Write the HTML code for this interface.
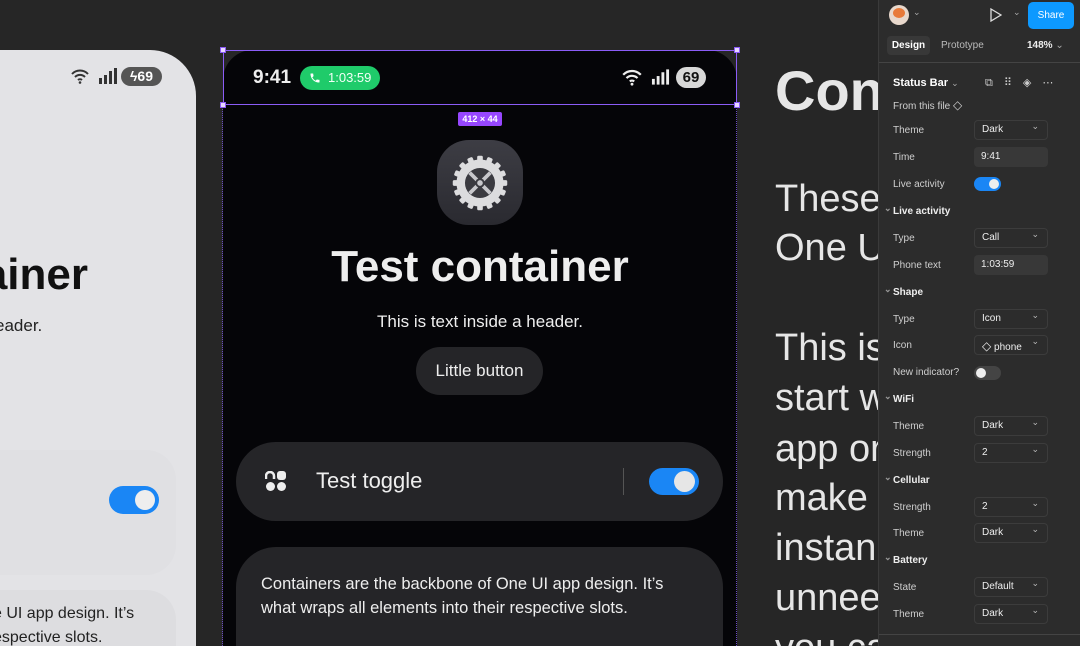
<!DOCTYPE html>
<html><head><style>
*{margin:0;padding:0;box-sizing:border-box}
html,body{width:1080px;height:646px;overflow:hidden}
body{background:#262626;font-family:"Liberation Sans",sans-serif;position:relative}
.abs{position:absolute}
.lp{left:-40px;top:50px;width:236px;height:596px;background:#e3e3e6;border-top-right-radius:46px;overflow:hidden}
.mp{left:223px;top:50px;width:514px;height:596px;background:#050508;border-top-left-radius:30px;border-top-right-radius:30px;overflow:hidden}
.rt{left:775px;color:#e6e6e6;font-size:38px;white-space:nowrap}
.panel{left:878px;top:0;width:202px;height:646px;background:#2c2c2c;border-left:1px solid #3a3a3a;color:#ddd;font-size:10px}
.lbl{position:absolute;left:14px;color:#cfcfcf;font-size:10px}
.sec{position:absolute;left:14px;color:#eee;font-size:10px;font-weight:bold}
.sec:before{content:"⌄";position:absolute;left:-9px;top:-3px;color:#999;font-size:9px}
.dd{position:absolute;left:95px;width:74px;height:20px;border:1px solid #3c3c3c;border-radius:4px;color:#eee;font-size:10px;padding:3px 0 0 7px}
.dd:after{content:"⌄";position:absolute;right:8px;top:0px;color:#bbb;font-size:9px}
.inp{position:absolute;left:95px;width:74px;height:20px;background:#383838;border-radius:4px;color:#eee;font-size:10px;padding:4px 0 0 7px}
</style></head><body>
<div class="abs lp">
  <div class="abs" style="left:110px;top:18px;color:#333;font-size:16px">
    <svg width="20" height="16" viewBox="0 0 20 16" style="position:absolute;left:0;top:0"><path d="M2 6a11 11 0 0 1 16 0M5 9a7 7 0 0 1 10 0M8 12a3 3 0 0 1 4 0" stroke="#333" stroke-width="2" fill="none"/><circle cx="10" cy="14.5" r="1.3" fill="#333"/></svg>
    <svg width="20" height="16" viewBox="0 0 20 16" style="position:absolute;left:28px;top:0"><rect x="1" y="10" width="3" height="6" fill="#333"/><rect x="6" y="7" width="3" height="9" fill="#333"/><rect x="11" y="3" width="3" height="13" fill="#333"/><rect x="16" y="0" width="3" height="16" fill="#333"/></svg>
    <div style="position:absolute;left:51px;top:-1px;width:41px;height:19px;background:#555;border-radius:10px;color:#fff;font-weight:bold;font-size:14px;text-align:center;line-height:19px">ϟ69</div>
  </div>
  <div class="abs" style="left:0;top:200px;font-size:44px;font-weight:bold;color:#111;width:128px;text-align:right">ainer</div>
  <div class="abs" style="left:35px;top:266px;font-size:17px;color:#222">eader.</div>
  <div class="abs" style="left:0;top:400px;width:216px;height:125px;background:#e0e0e3;border-radius:30px"></div>
  <div class="abs" style="left:149px;top:436px;width:50px;height:28px;background:#1a86f5;border-radius:14px"><div style="position:absolute;right:4px;top:4px;width:20px;height:20px;border-radius:50%;background:#eee"></div></div>
  <div class="abs" style="left:0;top:540px;width:216px;height:200px;background:#dddde0;border-radius:30px"></div>
  <div class="abs" style="left:33px;top:552px;font-size:16px;color:#222;line-height:24px;white-space:nowrap">e UI app design. It’s<br>espective slots.</div>
</div>

<div class="abs mp">
  <div class="abs" style="left:30px;top:17px;color:#eee;font-size:19px;font-weight:bold">9:41</div>
  <div class="abs" style="left:77px;top:16px;width:80px;height:24px;border-radius:12px;background:#1fcb6a;color:#f2fff6;font-size:13px;line-height:24px;padding-left:28px">1:03:59
    <svg width="12" height="12" viewBox="0 0 24 24" style="position:absolute;left:9px;top:6px"><path d="M6.6 10.8a15 15 0 0 0 6.6 6.6l2.2-2.2c.3-.3.7-.4 1-.2 1.1.4 2.3.6 3.6.6.6 0 1 .4 1 1V20c0 .6-.4 1-1 1A17 17 0 0 1 3 4c0-.6.4-1 1-1h3.5c.6 0 1 .4 1 1 0 1.3.2 2.5.6 3.6.1.3 0 .7-.2 1z" fill="#fff"/></svg></div>
  <svg class="abs" style="left:398px;top:18px" width="22" height="18" viewBox="0 0 20 16"><path d="M2 6a11 11 0 0 1 16 0M5 9a7 7 0 0 1 10 0M8 12a3 3 0 0 1 4 0" stroke="#eee" stroke-width="2" fill="none"/><circle cx="10" cy="14.5" r="1.3" fill="#eee"/></svg>
  <svg class="abs" style="left:428px;top:19px" width="19" height="16" viewBox="0 0 20 16"><rect x="1" y="10" width="3" height="6" fill="#eee"/><rect x="6" y="7" width="3" height="9" fill="#eee"/><rect x="11" y="3" width="3" height="13" fill="#eee"/><rect x="16" y="0" width="3" height="16" fill="#eee"/></svg>
  <div class="abs" style="left:453px;top:17px;width:30px;height:21px;border-radius:11px;background:#d8d8d8;color:#111;font-weight:bold;font-size:15px;text-align:center;line-height:21px">69</div>
  <div class="abs" style="left:214px;top:90px;width:86px;height:85px;border-radius:32px;background:linear-gradient(#3d3d44,#2a2a30)"></div>
  <svg class="abs" style="left:226px;top:102px" width="62" height="62" viewBox="0 0 66 66">
    <g fill="#dcdcde"><circle cx="33" cy="33" r="25"/>
    <g id="t"><rect x="30" y="4" width="6" height="7" rx="1.5"/></g>
    <use href="#t" transform="rotate(22.5 33 33)"/><use href="#t" transform="rotate(45 33 33)"/><use href="#t" transform="rotate(67.5 33 33)"/><use href="#t" transform="rotate(90 33 33)"/><use href="#t" transform="rotate(112.5 33 33)"/><use href="#t" transform="rotate(135 33 33)"/><use href="#t" transform="rotate(157.5 33 33)"/><use href="#t" transform="rotate(180 33 33)"/><use href="#t" transform="rotate(202.5 33 33)"/><use href="#t" transform="rotate(225 33 33)"/><use href="#t" transform="rotate(247.5 33 33)"/><use href="#t" transform="rotate(270 33 33)"/><use href="#t" transform="rotate(292.5 33 33)"/><use href="#t" transform="rotate(315 33 33)"/><use href="#t" transform="rotate(337.5 33 33)"/></g>
    <circle cx="33" cy="33" r="16" fill="#3a3a40"/>
    <g stroke="#c8c8cc" stroke-width="4"><line x1="22" y1="22" x2="44" y2="44"/><line x1="44" y1="22" x2="22" y2="44"/></g>
    <circle cx="33" cy="33" r="5" fill="#3a3a40"/><circle cx="33" cy="33" r="3" fill="#c8c8cc"/>
  </svg>
  <div class="abs" style="left:0;width:514px;top:192px;text-align:center;color:#eee;font-size:44px;font-weight:bold">Test container</div>
  <div class="abs" style="left:0;width:514px;top:262px;text-align:center;color:#eee;font-size:17px">This is text inside a header.</div>
  <div class="abs" style="left:193px;top:297px;width:127px;height:48px;border-radius:24px;background:#252528;color:#eee;font-size:17px;text-align:center;line-height:48px">Little button</div>
  <div class="abs" style="left:13px;top:392px;width:487px;height:79px;border-radius:40px;background:#252528">
    <svg class="abs" style="left:29px;top:29px" width="22" height="21" viewBox="0 0 22 21"><path d="M1 8V5a4 4 0 0 1 8 0v3" stroke="#eee" stroke-width="2.5" fill="none"/><rect x="12" y="0" width="9" height="9" rx="3" fill="#eee"/><rect x="1" y="11" width="9" height="9" rx="4.5" fill="#eee"/><rect x="12" y="11" width="9" height="9" rx="4.5" fill="#eee"/></svg>
    <div class="abs" style="left:80px;top:26px;color:#eee;font-size:22px">Test toggle</div>
    <div class="abs" style="left:387px;top:26px;width:1px;height:27px;background:#555"></div>
    <div class="abs" style="left:413px;top:26px;width:50px;height:27px;border-radius:14px;background:#1a86f5"><div style="position:absolute;right:4px;top:3px;width:21px;height:21px;border-radius:50%;background:#e6e6e6"></div></div>
  </div>
  <div class="abs" style="left:13px;top:497px;width:487px;height:220px;border-radius:40px;background:#252528">
    <div class="abs" style="left:25px;top:25px;color:#eee;font-size:16.5px;line-height:24px;white-space:nowrap">Containers are the backbone of One UI app design. It’s<br>what wraps all elements into their respective slots.</div>
  </div>
</div>
<div class="abs" style="left:223px;top:50px;width:514px;height:55px;border:1.5px solid #8b5cf6"></div>
<div class="abs" style="left:222px;top:105px;width:1px;height:541px;border-left:1px dotted #6a4cc0"></div>
<div class="abs" style="left:736px;top:105px;width:1px;height:541px;border-left:1px dotted #6a4cc0"></div>
<div class="abs" style="left:220px;top:47px;width:6px;height:6px;background:#e9d8ff;border:1px solid #8b5cf6"></div>
<div class="abs" style="left:734px;top:47px;width:6px;height:6px;background:#e9d8ff;border:1px solid #8b5cf6"></div>
<div class="abs" style="left:220px;top:102px;width:6px;height:6px;background:#e9d8ff;border:1px solid #8b5cf6"></div>
<div class="abs" style="left:734px;top:102px;width:6px;height:6px;background:#e9d8ff;border:1px solid #8b5cf6"></div>
<div class="abs" style="left:458px;top:112px;width:44px;height:14px;background:#9747ff;border-radius:2px;color:#fff;font-size:9px;font-weight:bold;text-align:center;line-height:14px">412 × 44</div>

<div class="abs rt" style="top:58px;font-size:56px;font-weight:bold">Con</div>
<div class="abs rt" style="top:178px">These</div>
<div class="abs rt" style="top:227px">One U</div>
<div class="abs rt" style="top:327px">This is</div>
<div class="abs rt" style="top:377px">start w</div>
<div class="abs rt" style="top:428px">app or</div>
<div class="abs rt" style="top:477px">make</div>
<div class="abs rt" style="top:527px">instan</div>
<div class="abs rt" style="top:577px">unnee</div>
<div class="abs rt" style="top:627px">you ca</div>

<div class="abs panel">
  <div class="abs" style="left:10px;top:5px;width:20px;height:20px;border-radius:50%;background:#e8d8cc;overflow:hidden"><div style="position:absolute;left:4px;top:3px;width:12px;height:10px;border-radius:50%;background:#e87a3a"></div></div>
  <div class="abs" style="left:34px;top:7px;color:#aaa;font-size:9px">⌄</div>
  <svg class="abs" style="left:111px;top:8px" width="12" height="14" viewBox="0 0 12 14"><path d="M1 1l10 6-10 6z" stroke="#ddd" stroke-width="1.3" fill="none"/></svg>
  <div class="abs" style="left:134px;top:7px;color:#aaa;font-size:9px">⌄</div>
  <div class="abs" style="left:149px;top:2px;width:46px;height:27px;border-radius:5px;background:#0d99ff;color:#fff;font-size:10px;text-align:center;line-height:27px">Share</div>
  <div class="abs" style="left:8px;top:36px;width:43px;height:19px;background:#383838;border-radius:4px;color:#fff;font-size:10px;font-weight:bold;text-align:center;line-height:19px">Design</div>
  <div class="abs" style="left:62px;top:40px;color:#bbb;font-size:10px">Prototype</div>
  <div class="abs" style="left:148px;top:40px;color:#eee;font-size:10px;font-weight:bold">148% <span style="color:#aaa;font-weight:normal">⌄</span></div>
  <div class="abs" style="left:0;top:62px;width:202px;height:1px;background:#444"></div>
  <div class="abs" style="left:14px;top:77px;color:#fff;font-size:11px;font-weight:bold">Status Bar <span style="color:#aaa;font-weight:normal;font-size:9px">⌄</span></div>
  <div class="abs" style="left:106px;top:76px;color:#ccc;font-size:11px;letter-spacing:11px">⧉⠿◈⋯</div>
  <div class="lbl" style="top:98px">From this file <span style="font-size:12px">◇</span></div>
  <div class="lbl" style="top:125px">Theme</div><div class="dd" style="top:120px">Dark</div>
  <div class="lbl" style="top:152px">Time</div><div class="inp" style="top:147px">9:41</div>
  <div class="lbl" style="top:179px">Live activity</div>
  <div class="abs" style="left:95px;top:177px;width:27px;height:14px;border-radius:7px;background:#1a86f5"><div style="position:absolute;right:2px;top:2px;width:10px;height:10px;border-radius:50%;background:#eee"></div></div>
  <div class="sec" style="top:206px">Live activity</div>
  <div class="lbl" style="top:233px">Type</div><div class="dd" style="top:228px">Call</div>
  <div class="lbl" style="top:260px">Phone text</div><div class="inp" style="top:255px">1:03:59</div>
  <div class="sec" style="top:287px">Shape</div>
  <div class="lbl" style="top:314px">Type</div><div class="dd" style="top:309px">Icon</div>
  <div class="lbl" style="top:340px">Icon</div><div class="dd" style="top:335px"><span style="font-size:12px">◇</span> phone</div>
  <div class="lbl" style="top:367px">New indicator?</div>
  <div class="abs" style="left:95px;top:366px;width:27px;height:14px;border-radius:7px;background:#444"><div style="position:absolute;left:2px;top:2px;width:10px;height:10px;border-radius:50%;background:#eee"></div></div>
  <div class="sec" style="top:394px">WiFi</div>
  <div class="lbl" style="top:421px">Theme</div><div class="dd" style="top:416px">Dark</div>
  <div class="lbl" style="top:448px">Strength</div><div class="dd" style="top:443px">2</div>
  <div class="sec" style="top:475px">Cellular</div>
  <div class="lbl" style="top:502px">Strength</div><div class="dd" style="top:497px">2</div>
  <div class="lbl" style="top:528px">Theme</div><div class="dd" style="top:523px">Dark</div>
  <div class="sec" style="top:555px">Battery</div>
  <div class="lbl" style="top:582px">State</div><div class="dd" style="top:577px">Default</div>
  <div class="lbl" style="top:609px">Theme</div><div class="dd" style="top:604px">Dark</div>
  <div class="abs" style="left:0;top:634px;width:202px;height:1px;background:#444"></div>
</div>
</body></html>
